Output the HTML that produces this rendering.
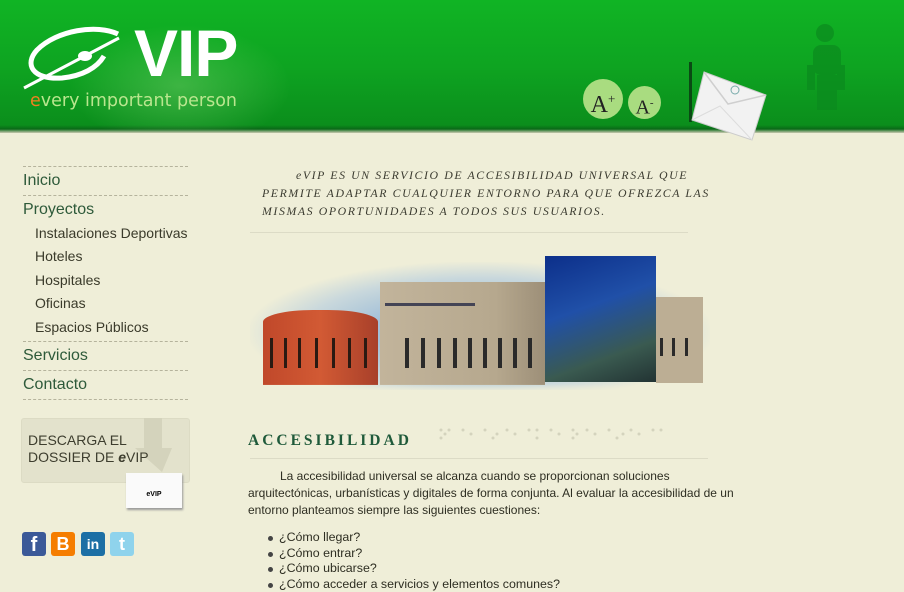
<!DOCTYPE html>
<html><head><meta charset="utf-8"><style>
*{margin:0;padding:0;box-sizing:border-box}
body{width:904px;height:592px;overflow:hidden;background:#efeed8;font-family:"Liberation Sans",sans-serif;position:relative}
.hdr{position:absolute;left:0;top:0;width:904px;height:133px;background:linear-gradient(180deg,#10b424 0%,#0ea421 50%,#0b8e1c 94%,#0a6a18 97%,#c9c9b0 100%)}
.glow{position:absolute;left:60px;top:20px;width:240px;height:110px;background:radial-gradient(ellipse at 50% 60%,rgba(120,210,110,.45),rgba(0,0,0,0) 65%)}
.abs{position:absolute}
.nav a{position:absolute;left:23px;color:#2e5a3a;font-size:16px;text-decoration:none}
.nav .s{left:35px;font-size:14px;color:#3a3a2a}
.dash{position:absolute;left:23px;width:165px;border-top:1px dashed #b5b39c}
.intro{position:absolute;left:262px;top:166px;width:480px;font-family:"Liberation Serif",serif;font-style:italic;font-size:11.8px;letter-spacing:1.6px;line-height:18px;color:#3b3b30;white-space:nowrap}
p.t{position:absolute;left:248px;top:468px;width:500px;font-size:12px;line-height:17px;color:#2e2e22}
ul{position:absolute;left:279px;top:530px;list-style:none;font-size:12.4px;line-height:15.5px;color:#2e2e22}
ul li:before{content:"";position:absolute;left:-11px;margin-top:6px;width:5px;height:5px;border-radius:50%;background:#444}
.soc{position:absolute;top:532px;width:24px;height:24px;border-radius:3px;color:#fff;font-weight:bold;text-align:center}
</style></head><body>
<div class="hdr">
 <div class="glow"></div>
 <svg class="abs" style="left:22px;top:26px" width="100" height="66" viewBox="0 0 100 66">
  <path d="M96 8 C75 -2 35 4 15 24 C2 38 10 54 40 52 C60 50 75 42 82 30" fill="none" stroke="#fff" stroke-width="5"/>
  <line x1="2" y1="62" x2="97" y2="12" stroke="#fff" stroke-width="3"/>
  <ellipse cx="63" cy="30" rx="7" ry="5" fill="#fff"/>
 </svg>
 <div class="abs" style="left:134px;top:18px;color:#fff;font-weight:bold;font-size:66px;line-height:70px;letter-spacing:-1px">VIP</div>
 <div class="abs" style="left:30px;top:91px;color:#b9e68e;font-size:17.5px;font-family:'DejaVu Sans',sans-serif"><span style="color:#f08020">e</span>very important person</div>
 <div class="abs" style="left:583px;top:79px;width:40px;height:40px;border-radius:50%;background:#a9dc80;font-family:'Liberation Serif',serif;font-size:24px;color:#222;text-align:center;line-height:40px">A<sup style="font-size:13px">+</sup></div>
 <div class="abs" style="left:628px;top:86px;width:33px;height:33px;border-radius:50%;background:#a9dc80;font-family:'Liberation Serif',serif;font-size:20px;color:#222;text-align:center;line-height:34px">A<sup style="font-size:11px">-</sup></div>
 <div class="abs" style="left:689px;top:62px;width:3px;height:60px;background:#0a4a14"></div>
 <svg class="abs" style="left:690px;top:68px" width="80" height="74" viewBox="0 0 80 74">
  <polygon points="14,4 76,27 62,72 2,52" fill="#f2f2f2" stroke="#ccc"/>
  <polyline points="14,4 38,36 76,27" fill="none" stroke="#cfcfcf" stroke-width="1.5"/>
  <polyline points="2,52 30,38 62,72" fill="none" stroke="#dcdcdc"/>
  <circle cx="45" cy="22" r="4" fill="none" stroke="#7aa" stroke-width="1"/>
 </svg>
 <svg class="abs" style="left:795px;top:20px" width="60" height="100" viewBox="0 0 60 100">
  <g fill="#0b8a1e" opacity=".7"><circle cx="30" cy="13" r="9"/><rect x="18" y="25" width="28" height="30" rx="8"/><rect x="12" y="45" width="8" height="25"/><rect x="42" y="45" width="8" height="25"/><rect x="22" y="55" width="20" height="35"/></g>
 </svg>
</div>

<div class="nav">
 <div class="dash" style="top:166px"></div>
 <a style="top:172px">Inicio</a>
 <div class="dash" style="top:195px"></div>
 <a style="top:201px">Proyectos</a>
 <a class="s" style="top:225px">Instalaciones Deportivas</a>
 <a class="s" style="top:248px">Hoteles</a>
 <a class="s" style="top:272px">Hospitales</a>
 <a class="s" style="top:295px">Oficinas</a>
 <a class="s" style="top:319px">Espacios Públicos</a>
 <div class="dash" style="top:341px"></div>
 <a style="top:347px">Servicios</a>
 <div class="dash" style="top:370px"></div>
 <a style="top:376px">Contacto</a>
 <div class="dash" style="top:399px"></div>
</div>

<div class="abs" style="left:21px;top:418px;width:169px;height:65px;background:#e3e2cc;border:1px solid #dcdbc4;border-radius:3px"></div>
<div class="abs" style="left:144px;top:418px;width:18px;height:30px;background:#d4d3bc"></div>
<div class="abs" style="left:135px;top:448px;width:0;height:0;border-left:27px solid transparent;border-right:10px solid transparent;border-top:24px solid #d4d3bc"></div>
<div class="abs" style="left:28px;top:432px;font-size:14px;line-height:17px;color:#3d3d2e">DESCARGA EL<br>DOSSIER DE <b style="font-style:italic">e</b>VIP</div>
<div class="abs" style="left:126px;top:473px;width:56px;height:35px;background:#fafafa;box-shadow:1px 2px 2px #999;font-size:7px;text-align:center;padding-top:18px;font-weight:bold">eVIP</div>

<div class="soc" style="left:22px;background:#3b5998;font-size:20px;line-height:26px">f</div>
<div class="soc" style="left:51px;background:#f57d00;font-size:18px;line-height:24px">B</div>
<div class="soc" style="left:81px;background:#1c6fa5;font-size:14px;line-height:24px">in</div>
<div class="soc" style="left:110px;background:#8fd3ec;font-size:18px;line-height:24px">t</div>

<div class="intro"><span style="padding-left:34px">eVIP ES UN SERVICIO DE ACCESIBILIDAD UNIVERSAL QUE</span><br>PERMITE ADAPTAR CUALQUIER ENTORNO PARA QUE OFREZCA LAS<br>MISMAS OPORTUNIDADES A TODOS SUS USUARIOS.</div>
<div class="abs" style="left:250px;top:232px;width:438px;border-top:1px solid #dcdbc6"></div>

<div class="abs" style="left:250px;top:262px;width:460px;height:128px;background:radial-gradient(ellipse at 50% 55%,#8fb4d6 20%,#c9d8dc 55%,rgba(239,238,216,0) 72%)"></div>
<div class="abs" style="left:263px;top:310px;width:115px;height:75px;background:linear-gradient(90deg,#c0482a,#d25a34 50%,#a8402a);border-radius:50px/12px;border-bottom-left-radius:0;border-bottom-right-radius:0"></div>
<div class="abs" style="left:380px;top:282px;width:165px;height:103px;background:linear-gradient(90deg,#c2b49b,#b6a88e 70%,#9d8f78)"></div>
<div class="abs" style="left:385px;top:303px;width:90px;height:3px;background:#445"></div>
<div class="abs" style="left:545px;top:256px;width:111px;height:126px;background:linear-gradient(160deg,#0c2f8a,#2050a8 40%,#3a5a50 75%,#233)"></div>
<div class="abs" style="left:656px;top:297px;width:47px;height:86px;background:#bcae94"></div>
<svg class="abs" style="left:260px;top:338px" width="440" height="32">
 <g fill="#2a1a12"><rect x="10" y="0" width="3" height="30"/><rect x="24" y="0" width="3" height="30"/><rect x="38" y="0" width="3" height="30"/><rect x="55" y="0" width="3" height="30"/><rect x="72" y="0" width="3" height="30"/><rect x="88" y="0" width="3" height="30"/><rect x="104" y="0" width="3" height="30"/></g>
 <g fill="#2a2a2a"><rect x="145" y="0" width="4" height="30"/><rect x="161" y="0" width="4" height="30"/><rect x="177" y="0" width="4" height="30"/><rect x="193" y="0" width="4" height="30"/><rect x="208" y="0" width="4" height="30"/><rect x="223" y="0" width="4" height="30"/><rect x="238" y="0" width="4" height="30"/><rect x="253" y="0" width="4" height="30"/><rect x="268" y="0" width="4" height="30"/><rect x="400" y="0" width="3" height="18"/><rect x="412" y="0" width="3" height="18"/><rect x="425" y="0" width="3" height="18"/></g>
</svg>
<div class="abs" style="left:248px;top:384px;width:460px;height:8px;background:linear-gradient(180deg,rgba(239,238,216,0),#efeed8)"></div>

<div class="abs" style="left:248px;top:432px;font-family:'Liberation Serif',serif;font-weight:bold;font-size:15.5px;letter-spacing:3px;color:#1f5a3a">ACCESIBILIDAD</div>
<svg class="abs" style="left:437px;top:427px" width="235" height="20"><g fill="#d4d3bd">
<circle cx="4" cy="3" r="1.5"/><circle cx="12" cy="3" r="1.5"/><circle cx="4" cy="11" r="1.5"/><circle cx="26" cy="3" r="1.5"/><circle cx="34" cy="7" r="1.5"/><circle cx="48" cy="3" r="1.5"/><circle cx="56" cy="11" r="1.5"/><circle cx="70" cy="3" r="1.5"/><circle cx="78" cy="7" r="1.5"/><circle cx="92" cy="3" r="1.5"/><circle cx="100" cy="3" r="1.5"/><circle cx="100" cy="11" r="1.5"/><circle cx="114" cy="3" r="1.5"/><circle cx="122" cy="7" r="1.5"/><circle cx="136" cy="3" r="1.5"/><circle cx="136" cy="11" r="1.5"/><circle cx="150" cy="3" r="1.5"/><circle cx="158" cy="7" r="1.5"/><circle cx="172" cy="3" r="1.5"/><circle cx="180" cy="11" r="1.5"/><circle cx="194" cy="3" r="1.5"/><circle cx="202" cy="7" r="1.5"/><circle cx="216" cy="3" r="1.5"/><circle cx="224" cy="3" r="1.5"/><circle cx="8" cy="7" r="1.5"/><circle cx="60" cy="7" r="1.5"/><circle cx="140" cy="7" r="1.5"/><circle cx="186" cy="7" r="1.5"/></g></svg>
<div class="abs" style="left:250px;top:458px;width:458px;border-top:1px solid #dcdbc6"></div>

<p class="t"><span style="padding-left:32px"></span>La accesibilidad universal se alcanza cuando se proporcionan soluciones<br>arquitectónicas, urbanísticas y digitales de forma conjunta. Al evaluar la accesibilidad de un<br>entorno planteamos siempre las siguientes cuestiones:</p>
<ul><li>¿Cómo llegar?</li><li>¿Cómo entrar?</li><li>¿Cómo ubicarse?</li><li>¿Cómo acceder a servicios y elementos comunes?</li></ul>
</body></html>
